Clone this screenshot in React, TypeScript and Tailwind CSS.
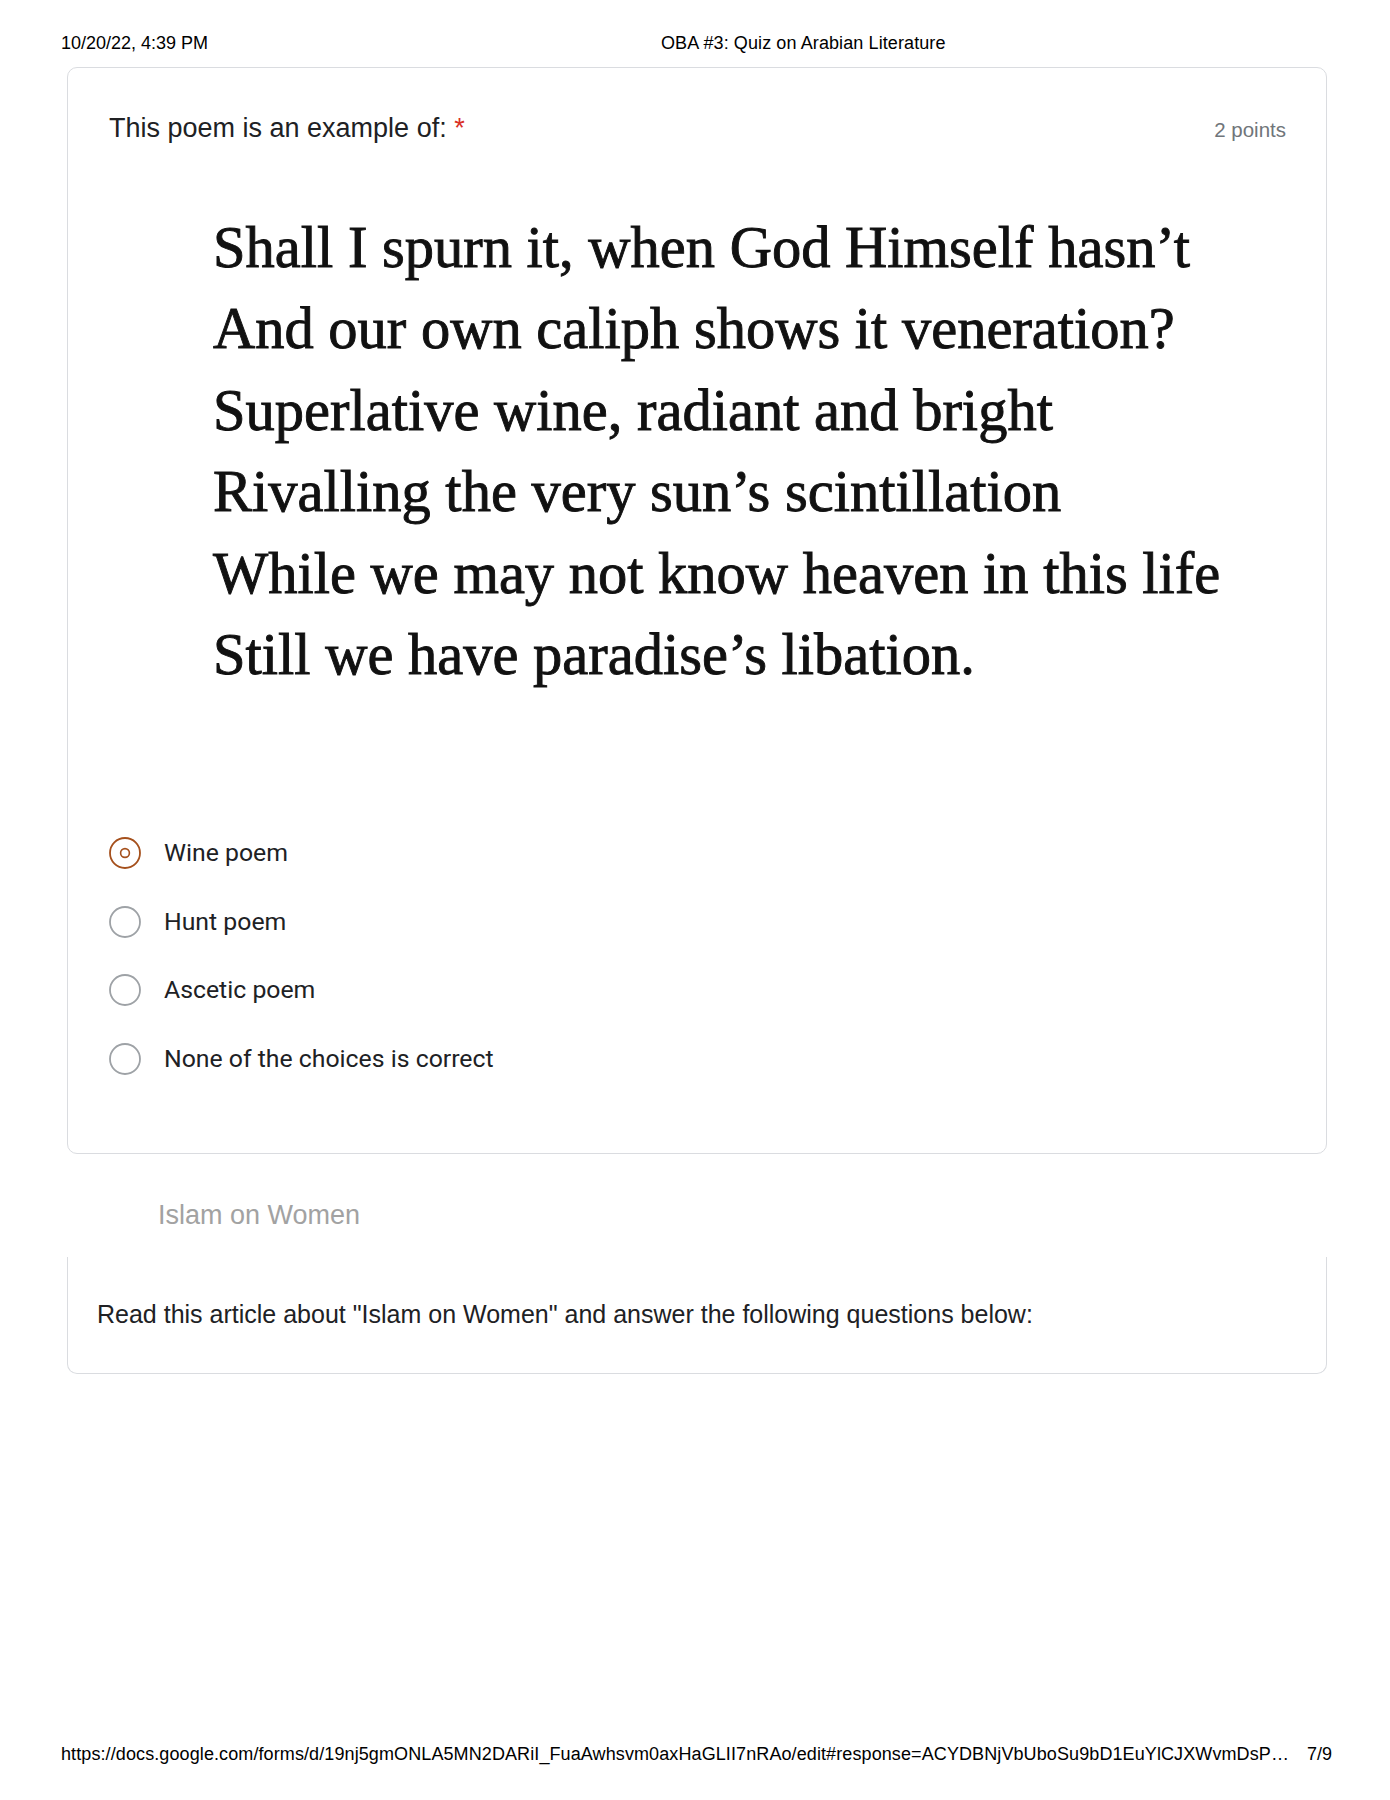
import React from "react";

const poem = [
  "Shall I spurn it, when God Himself hasn\u2019t",
  "And our own caliph shows it veneration?",
  "Superlative wine, radiant and bright",
  "Rivalling the very sun\u2019s scintillation",
  "While we may not know heaven in this life",
  "Still we have paradise\u2019s libation.",
];

const options = [
  { label: "Wine poem", selected: true },
  { label: "Hunt poem", selected: false },
  { label: "Ascetic poem", selected: false },
  { label: "None of the choices is correct", selected: false },
];

function Radio({ selected }: { selected: boolean }) {
  return (
    <svg width="32" height="32" viewBox="0 0 32 32" className="shrink-0">
      <circle
        cx="16"
        cy="16"
        r="15"
        fill="none"
        stroke={selected ? "#a5501c" : "#9ea2a6"}
        strokeWidth="1.8"
      />
      {selected && (
        <circle cx="16" cy="16" r="4.4" fill="none" stroke="#a5501c" strokeWidth="1.6" />
      )}
    </svg>
  );
}

export default function App() {
  return (
    <div className="w-[1390px] h-[1800px] bg-white flex flex-col text-black [font-family:'Liberation_Sans',Arial,sans-serif]">
      {/* print header */}
      <div className="flex pt-[33px] pl-[61px] text-[18px] leading-[21px]">
        <div className="w-[600px]">10/20/22, 4:39 PM</div>
        <div className="tracking-[0.1px]">OBA #3: Quiz on Arabian Literature</div>
      </div>

      {/* question card */}
      <div className="mt-[13px] ml-[67px] w-[1260px] h-[1087px] border border-[#dadce0] rounded-[10px] pt-[45px] pl-[41px] pr-[40px] flex flex-col">
        <div className="flex items-baseline justify-between">
          <div className="text-[27px] leading-[31px] text-[#202124]">
            This poem is an example of: <span className="text-[#d93025]">*</span>
          </div>
          <div className="text-[20.5px] text-[#70757a]">2 points</div>
        </div>

        <div className="mt-[61px] pl-[104px] [font-family:'Liberation_Serif','Times_New_Roman',serif] text-[58.5px] leading-[81.5px] text-[#111111] [-webkit-text-stroke:0.9px_#111111]">
          {poem.map((l) => (
            <div key={l} className="whitespace-nowrap">{l}</div>
          ))}
        </div>

        <div className="mt-[123px] flex flex-col [font-family:Roboto,Arial,sans-serif]">
          {options.map((o) => (
            <div key={o.label} className="h-[68.5px] flex items-center gap-[23px]">
              <Radio selected={o.selected} />
              <span className="text-[24.8px] text-[#202124]">{o.label}</span>
            </div>
          ))}
        </div>
      </div>

      {/* section header */}
      <div className="mt-[46px] pl-[158px] text-[27px] leading-[31px] text-[#a2a2a2]">Islam on Women</div>

      {/* description card */}
      <div className="mt-[26px] ml-[67px] w-[1260px] border-x border-b border-[#dadce0] rounded-b-[10px] pt-[43px] pb-[44px] pl-[29px]">
        <div className="text-[25px] leading-[29px] text-[#202124]">
          Read this article about "Islam on Women" and answer the following questions below:
        </div>
      </div>

      {/* print footer */}
      <div className="mt-auto pb-[35px] pl-[61px] pr-[58px] flex justify-between text-[18px] leading-[21px]">
        <div className="whitespace-nowrap tracking-[0.1px]">
          https://docs.google.com/forms/d/19nj5gmONLA5MN2DARiI_FuaAwhsvm0axHaGLII7nRAo/edit#response=ACYDBNjVbUboSu9bD1EuYlCJXWvmDsP…
        </div>
        <div>7/9</div>
      </div>
    </div>
  );
}
